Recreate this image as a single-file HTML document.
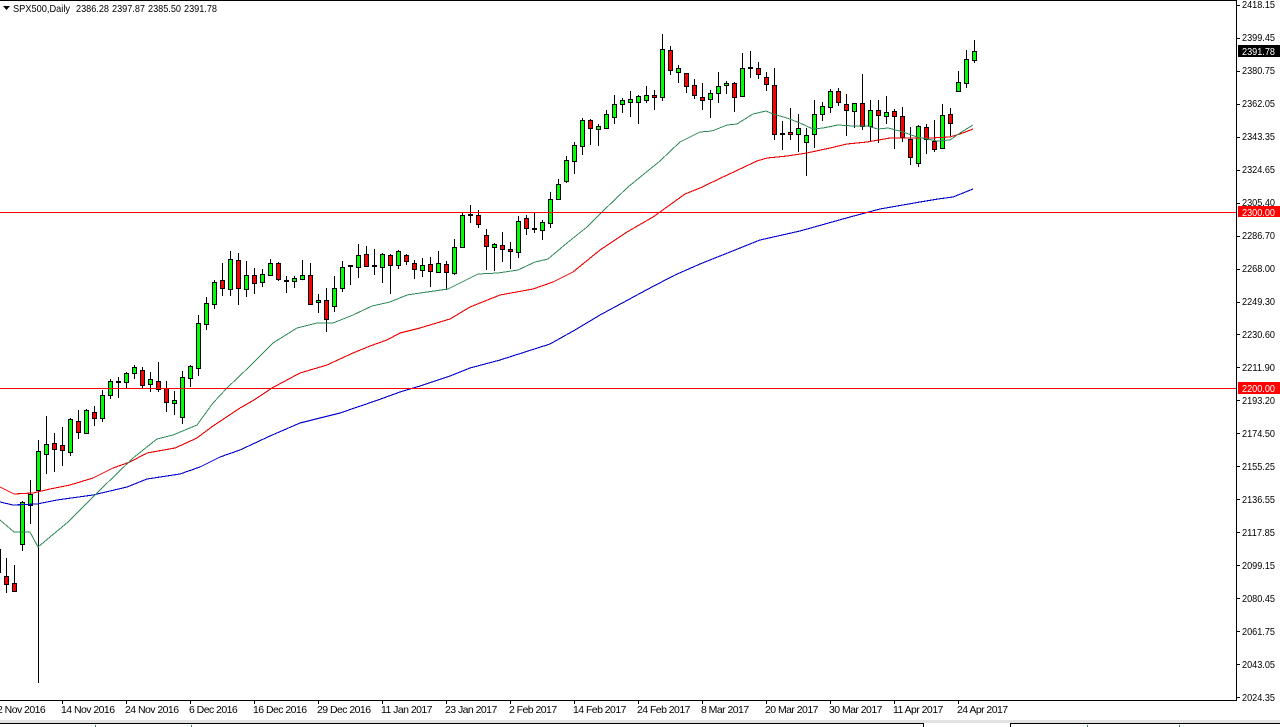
<!DOCTYPE html>
<html><head><meta charset="utf-8"><title>SPX500,Daily</title>
<style>
html,body{margin:0;padding:0;background:#fff;width:1280px;height:727px;overflow:hidden}
svg{display:block}
text{font-family:"Liberation Sans",Arial,sans-serif;font-size:10.5px;fill:#000}
.t{letter-spacing:-.55px}
</style></head><body>
<svg width="1280" height="727" viewBox="0 0 1280 727" xmlns="http://www.w3.org/2000/svg">
<rect width="1280" height="727" fill="#fff"/>
<g shape-rendering="crispEdges">
<!-- wicks -->
<path fill="none" stroke="#000" d="M6.5 558V593M14.5 565V592M22.5 501V551M30.5 480V524M38.5 440V683M46.5 416V474M54.5 433V472M62.5 427V466M70.5 418V456M78.5 410V439M86.5 409V434M94.5 406V426M102.5 390V422M110.5 379V399M118.5 377V398M126.5 372V388M134.5 365V379M142.5 367V388M150.5 372V392M158.5 362V392M166.5 381V412M174.5 391V415M182.5 371V424M190.5 365V387M198.5 315V376M206.5 297V330M214.5 280V309M222.5 263V296M230.5 251V296M238.5 253V305M246.5 261V297M254.5 268V294M262.5 269V287M270.5 259V276M278.5 262V281M286.5 276V293M294.5 276V288M302.5 260V280M310.5 263V305M318.5 294V313M326.5 288V332M334.5 276V312M342.5 261V292M350.5 265V285M358.5 244V278M366.5 246V267M374.5 249V275M382.5 253V283M390.5 254V294M398.5 250V269M406.5 254V265M414.5 260V279M422.5 258V277M430.5 257V287M438.5 251V273M446.5 261V290M454.5 239V275M462.5 212V248M470.5 205V223M478.5 210V228M486.5 229V270M494.5 243V271M502.5 232V262M510.5 242V269M518.5 216V258M526.5 215V235M534.5 212V233M542.5 220V240M550.5 192V228M558.5 179V200M566.5 156V183M574.5 142V174M582.5 118V155M590.5 119V145M598.5 124V146M606.5 110V129M614.5 95V124M622.5 98V113M630.5 91V117M638.5 95V124M646.5 86V103M654.5 90V110M662.5 34V101M670.5 46V75M678.5 65V83M686.5 73V93M694.5 79V99M702.5 83V110M710.5 90V118M718.5 72V103M726.5 81V94M734.5 82V112M742.5 53V96M750.5 51V78M758.5 62V79M766.5 72V91M774.5 68V140M782.5 121V150M790.5 108V140M798.5 114V152M806.5 128V176M814.5 100V148M822.5 102V121M830.5 89V113M838.5 88V106M846.5 94V136M854.5 103V128M862.5 74V130M870.5 100V141M878.5 100V143M886.5 96V124M894.5 109V149M902.5 107V142M910.5 127V165M918.5 125V167M926.5 124V154M934.5 120V152M942.5 104V149M950.5 108V136M958.5 71V92M966.5 50V88M974.5 40V63"/>
<!-- doji bars -->
<path fill="none" stroke="#000" stroke-width="2" d="M116 382H121M284 281H289M348 266H353M372 266H377M468 215H473M532 229H537M748 68H753M780 134H785"/>
<!-- green bodies -->
<path fill="#00ff00" stroke="#000" d="M20.5 502.5h4v42h-4zM28.5 494.5h4v11h-4zM36.5 451.5h4v39h-4zM44.5 444.5h4v10h-4zM68.5 419.5h4v33h-4zM84.5 410.5h4v23h-4zM100.5 395.5h4v23h-4zM108.5 381.5h4v14h-4zM124.5 373.5h4v9h-4zM132.5 367.5h4v6h-4zM148.5 379.5h4v5h-4zM172.5 400.5h4v3h-4zM180.5 377.5h4v40h-4zM188.5 366.5h4v12h-4zM196.5 323.5h4v45h-4zM204.5 303.5h4v21h-4zM212.5 282.5h4v22h-4zM228.5 259.5h4v30h-4zM244.5 275.5h4v14h-4zM260.5 274.5h4v8h-4zM268.5 263.5h4v12h-4zM292.5 278.5h4v3h-4zM300.5 275.5h4v4h-4zM316.5 300.5h4v2h-4zM332.5 288.5h4v18h-4zM340.5 267.5h4v21h-4zM356.5 255.5h4v12h-4zM380.5 254.5h4v13h-4zM396.5 251.5h4v14h-4zM420.5 265.5h4v5h-4zM436.5 263.5h4v9h-4zM452.5 247.5h4v26h-4zM460.5 215.5h4v32h-4zM492.5 244.5h4v3h-4zM516.5 221.5h4v31h-4zM540.5 222.5h4v8h-4zM548.5 199.5h4v24h-4zM556.5 184.5h4v15h-4zM564.5 160.5h4v21h-4zM572.5 145.5h4v16h-4zM580.5 120.5h4v26h-4zM596.5 126.5h4v3h-4zM604.5 114.5h4v14h-4zM612.5 104.5h4v13h-4zM620.5 100.5h4v4h-4zM628.5 99.5h4v3h-4zM636.5 96.5h4v6h-4zM644.5 95.5h4v5h-4zM660.5 49.5h4v48h-4zM676.5 68.5h4v4h-4zM708.5 93.5h4v6h-4zM716.5 86.5h4v7h-4zM724.5 83.5h4v2h-4zM740.5 68.5h4v28h-4zM796.5 128.5h4v6h-4zM804.5 135.5h4v7h-4zM812.5 114.5h4v20h-4zM820.5 106.5h4v8h-4zM828.5 91.5h4v16h-4zM852.5 103.5h4v8h-4zM868.5 110.5h4v16h-4zM884.5 112.5h4v4h-4zM916.5 126.5h4v37h-4zM940.5 115.5h4v33h-4zM956.5 82.5h4v9h-4zM964.5 59.5h4v24h-4zM972.5 51.5h4v9h-4z"/>
<!-- red bodies -->
<path fill="#ff0000" stroke="#000" d="M-3.5 549.5h4v23h-4zM4.5 576.5h4v8h-4zM12.5 583.5h4v8h-4zM52.5 443.5h4v6h-4zM60.5 445.5h4v5h-4zM76.5 421.5h4v11h-4zM92.5 412.5h4v6h-4zM140.5 370.5h4v15h-4zM156.5 381.5h4v8h-4zM164.5 388.5h4v14h-4zM220.5 280.5h4v8h-4zM236.5 260.5h4v28h-4zM252.5 275.5h4v8h-4zM276.5 263.5h4v16h-4zM308.5 275.5h4v29h-4zM324.5 300.5h4v19h-4zM364.5 254.5h4v12h-4zM388.5 255.5h4v10h-4zM404.5 255.5h4v6h-4zM412.5 263.5h4v6h-4zM428.5 264.5h4v7h-4zM444.5 264.5h4v8h-4zM476.5 215.5h4v9h-4zM484.5 235.5h4v11h-4zM500.5 245.5h4v4h-4zM508.5 249.5h4v2h-4zM524.5 218.5h4v10h-4zM588.5 120.5h4v8h-4zM652.5 95.5h4v2h-4zM668.5 50.5h4v20h-4zM684.5 73.5h4v13h-4zM692.5 85.5h4v10h-4zM700.5 97.5h4v3h-4zM732.5 83.5h4v14h-4zM756.5 68.5h4v6h-4zM764.5 77.5h4v7h-4zM772.5 85.5h4v49h-4zM788.5 132.5h4v2h-4zM836.5 91.5h4v11h-4zM844.5 104.5h4v6h-4zM860.5 103.5h4v23h-4zM876.5 110.5h4v5h-4zM892.5 111.5h4v5h-4zM900.5 116.5h4v21h-4zM908.5 139.5h4v18h-4zM924.5 127.5h4v12h-4zM932.5 141.5h4v8h-4zM948.5 114.5h4v9h-4z"/>
</g>
<!-- moving averages -->
<g fill="none" shape-rendering="crispEdges" stroke-linejoin="round">
<polyline stroke="#0000cd" stroke-width="1.1" points="0,502 13,505 37,504 57,500 93,495 127,487 147,479 180,474 200,467 220,457 240,450 270,436 300,423 340,413 378,400 400,392 420,386 450,376 470,368 500,360 550,344 575,330 600,315 650,288 675,275 700,264 730,252 760,240 800,231 850,217 880,209 920,202 938,199 953,197 973,189"/>
<polyline stroke="#ee0000" stroke-width="1.1" points="0,487 14,494 33,493 50,489 70,485 93,478 113,468 130,462 147,453 175,448 197,438 213,426 240,408 254,400 272,388 300,373 327,365 353,353 370,346 387,340 400,333 420,328 450,319 470,307 500,295 533,289 553,282 573,272 600,250 627,232 653,217 660,212 685,194 700,188 723,177 740,169 757,161 767,158 787,156 807,153 830,148 847,144 867,142 890,138 910,138 930,138 950,137 960,134 973,129"/>
<polyline stroke="#2e8b57" stroke-width="1" points="0,520 14,532 30,532 38,547 68,522 100,490 133,458 157,439 173,435 197,425 213,403 227,388 250,366 273,343 297,328 317,323 333,323 353,315 372,306 390,302 407,295 420,293 448,289 478,274 498,273 518,270 535,262 548,259 567,243 587,227 602,212 628,187 660,161 680,142 700,132 712,131 727,125 737,124 753,114 766,111 773,114 787,118 800,123 813,129 823,128 838,125 853,126 867,126 878,129 888,128 903,132 917,137 937,141 950,140 960,133 973,125"/>
</g>
<g shape-rendering="crispEdges">
<!-- horizontal levels -->
<rect x="0" y="212" width="1236" height="1" fill="#ff0000"/>
<rect x="0" y="388" width="1236" height="1" fill="#ff0000"/>
<!-- frame -->
<rect x="0" y="0" width="1237" height="1" fill="#000"/>
<rect x="1236" y="0" width="1" height="701" fill="#000"/>
<rect x="0" y="700" width="1237" height="1" fill="#000"/>
<!-- price ticks -->
<path stroke="#000" fill="none" d="M1237 5.5h3M1237 38.5h3M1237 71.5h3M1237 104.5h3M1237 137.5h3M1237 170.5h3M1237 203.5h3M1237 236.5h3M1237 269.5h3M1237 302.5h3M1237 334.5h3M1237 367.5h3M1237 400.5h3M1237 433.5h3M1237 466.5h3M1237 499.5h3M1237 532.5h3M1237 565.5h3M1237 598.5h3M1237 631.5h3M1237 664.5h3M1237 697.5h3"/>
<!-- time ticks -->
<path stroke="#000" fill="none" d="M62.5 701v3M126.5 701v3M190.5 701v3M254.5 701v3M318.5 701v3M382.5 701v3M446.5 701v3M510.5 701v3M574.5 701v3M638.5 701v3M702.5 701v3M766.5 701v3M830.5 701v3M894.5 701v3M958.5 701v3"/>
<!-- price tags -->
<rect x="1238" y="45" width="42" height="12" fill="#000"/>
<rect x="1238" y="206" width="42" height="11" fill="#ff0000"/>
<rect x="1238" y="382" width="42" height="12" fill="#ff0000"/>
<!-- bottom strip -->
<rect x="0" y="720" width="1280" height="3" fill="#e2e2e2"/>
<rect x="0" y="723" width="924" height="1" fill="#000"/>
<rect x="923" y="723" width="1" height="4" fill="#000"/>
<rect x="1010" y="723" width="270" height="1" fill="#000"/>
<rect x="1010" y="723" width="1" height="4" fill="#000"/>
<path stroke="#2e8b57" fill="none" d="M95.5 725v2M191.5 725v2M1087.5 725v2M1179.5 725v2"/>
</g>
<!-- header -->
<path d="M3 6h7l-3.5 4z" fill="#000"/>
<text x="13" y="12" textLength="57" lengthAdjust="spacingAndGlyphs">SPX500,Daily</text>
<text x="76" y="12" textLength="33" lengthAdjust="spacingAndGlyphs">2386.28</text>
<text x="112" y="12" textLength="33" lengthAdjust="spacingAndGlyphs">2397.87</text>
<text x="148" y="12" textLength="33" lengthAdjust="spacingAndGlyphs">2385.50</text>
<text x="184" y="12" textLength="33" lengthAdjust="spacingAndGlyphs">2391.78</text>
<!-- price labels -->
<g>
<text x="1242" y="8" textLength="33" lengthAdjust="spacingAndGlyphs">2418.15</text>
<text x="1242" y="41" textLength="33" lengthAdjust="spacingAndGlyphs">2399.45</text>
<text x="1242" y="74" textLength="33" lengthAdjust="spacingAndGlyphs">2380.75</text>
<text x="1242" y="107" textLength="33" lengthAdjust="spacingAndGlyphs">2362.05</text>
<text x="1242" y="140" textLength="33" lengthAdjust="spacingAndGlyphs">2343.35</text>
<text x="1242" y="173" textLength="33" lengthAdjust="spacingAndGlyphs">2324.65</text>
<text x="1242" y="206" textLength="33" lengthAdjust="spacingAndGlyphs">2305.40</text>
<text x="1242" y="239" textLength="33" lengthAdjust="spacingAndGlyphs">2286.70</text>
<text x="1242" y="272" textLength="33" lengthAdjust="spacingAndGlyphs">2268.00</text>
<text x="1242" y="305" textLength="33" lengthAdjust="spacingAndGlyphs">2249.30</text>
<text x="1242" y="338" textLength="33" lengthAdjust="spacingAndGlyphs">2230.60</text>
<text x="1242" y="371" textLength="33" lengthAdjust="spacingAndGlyphs">2211.90</text>
<text x="1242" y="404" textLength="33" lengthAdjust="spacingAndGlyphs">2193.20</text>
<text x="1242" y="437" textLength="33" lengthAdjust="spacingAndGlyphs">2174.50</text>
<text x="1242" y="470" textLength="33" lengthAdjust="spacingAndGlyphs">2155.25</text>
<text x="1242" y="503" textLength="33" lengthAdjust="spacingAndGlyphs">2136.55</text>
<text x="1242" y="536" textLength="33" lengthAdjust="spacingAndGlyphs">2117.85</text>
<text x="1242" y="569" textLength="33" lengthAdjust="spacingAndGlyphs">2099.15</text>
<text x="1242" y="602" textLength="33" lengthAdjust="spacingAndGlyphs">2080.45</text>
<text x="1242" y="635" textLength="33" lengthAdjust="spacingAndGlyphs">2061.75</text>
<text x="1242" y="668" textLength="33" lengthAdjust="spacingAndGlyphs">2043.05</text>
<text x="1242" y="701" textLength="33" lengthAdjust="spacingAndGlyphs">2024.35</text>
<text x="1242" y="55" textLength="33" lengthAdjust="spacingAndGlyphs" style="fill:#fff">2391.78</text>
<text x="1242" y="216" textLength="33" lengthAdjust="spacingAndGlyphs" style="fill:#fff">2300.00</text>
<text x="1242" y="392" textLength="33" lengthAdjust="spacingAndGlyphs" style="fill:#fff">2200.00</text>
</g>
<!-- time labels -->
<g class="t">
<text x="-3" y="713">2 Nov 2016</text>
<text x="61" y="713">14 Nov 2016</text>
<text x="125" y="713">24 Nov 2016</text>
<text x="189" y="713">6 Dec 2016</text>
<text x="253" y="713">16 Dec 2016</text>
<text x="317" y="713">29 Dec 2016</text>
<text x="381" y="713">11 Jan 2017</text>
<text x="445" y="713">23 Jan 2017</text>
<text x="509" y="713">2 Feb 2017</text>
<text x="573" y="713">14 Feb 2017</text>
<text x="637" y="713">24 Feb 2017</text>
<text x="701" y="713">8 Mar 2017</text>
<text x="765" y="713">20 Mar 2017</text>
<text x="829" y="713">30 Mar 2017</text>
<text x="893" y="713">11 Apr 2017</text>
<text x="957" y="713">24 Apr 2017</text>
</g>
</svg>
</body></html>
